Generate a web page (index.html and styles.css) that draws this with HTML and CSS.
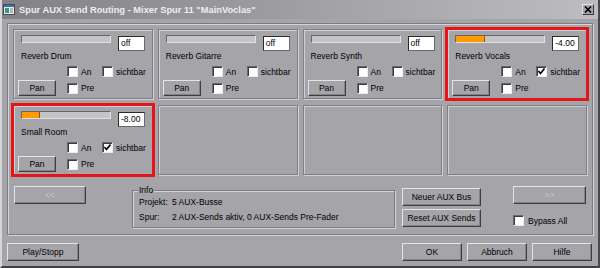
FILE: index.html
```html
<!DOCTYPE html>
<html lang="de">
<head>
    <meta charset="UTF-8">
    <title>Spur AUX Send Routing</title>
    <link rel="stylesheet" href="styles.css">
</head>
<body>
    <div class="window">
        <!-- Title bar -->
        <div class="titlebar">
            <svg class="app-icon" width="12" height="11" viewBox="0 0 12 11">
                <rect x="0.5" y="0.5" width="11" height="10" fill="#e8e8e8" stroke="#4a4a4a"/>
                <rect x="1" y="1" width="10" height="2" fill="#3c6ea8"/>
                <rect x="2" y="4" width="4" height="5" fill="#2f9c86"/>
                <rect x="7" y="4" width="3" height="5" fill="#b8b8b8"/>
            </svg>
            <span class="title">Spur AUX Send Routing - Mixer Spur 11 "MainVoclas"</span>
            <button class="close-btn" type="button">
                <svg width="8" height="7" viewBox="0 0 8 7">
                    <path d="M1 0.5 L7 6.5 M7 0.5 L1 6.5" stroke="#000" stroke-width="1.6"/>
                </svg>
            </button>
        </div>

        <div class="client">
            <div class="frame">
                <div class="send-grid">
                    <div class="send">
                        <div class="meter-row">
                            <div class="track"></div>
                            <div class="value">off</div>
                        </div>
                        <div class="send-name">Reverb Drum</div>
                        <div class="check-row">
                            <label class="check wide"><span class="box"></span>An</label>
                            <label class="check"><span class="box"></span>sichtbar</label>
                        </div>
                        <div class="pan-row">
                            <button class="btn pan" type="button">Pan</button>
                            <label class="check"><span class="box"></span>Pre</label>
                        </div>
                    </div>

                    <div class="send">
                        <div class="meter-row">
                            <div class="track"></div>
                            <div class="value">off</div>
                        </div>
                        <div class="send-name">Reverb Gitarre</div>
                        <div class="check-row">
                            <label class="check wide"><span class="box"></span>An</label>
                            <label class="check"><span class="box"></span>sichtbar</label>
                        </div>
                        <div class="pan-row">
                            <button class="btn pan" type="button">Pan</button>
                            <label class="check"><span class="box"></span>Pre</label>
                        </div>
                    </div>

                    <div class="send">
                        <div class="meter-row">
                            <div class="track"></div>
                            <div class="value">off</div>
                        </div>
                        <div class="send-name">Reverb Synth</div>
                        <div class="check-row">
                            <label class="check wide"><span class="box"></span>An</label>
                            <label class="check"><span class="box"></span>sichtbar</label>
                        </div>
                        <div class="pan-row">
                            <button class="btn pan" type="button">Pan</button>
                            <label class="check"><span class="box"></span>Pre</label>
                        </div>
                    </div>

                    <div class="send highlight">
                        <div class="meter-row">
                            <div class="track"><div class="level" style="width: 28px"></div></div>
                            <div class="value">-4.00</div>
                        </div>
                        <div class="send-name">Reverb Vocals</div>
                        <div class="check-row">
                            <label class="check wide"><span class="box"></span>An</label>
                            <label class="check"><span class="box"><svg width="9" height="9" viewBox="0 0 9 9"><path d="M1.5 4 L3.5 6.5 L7.5 1.5" fill="none" stroke="#000" stroke-width="1.7"/></svg></span>sichtbar</label>
                        </div>
                        <div class="pan-row">
                            <button class="btn pan" type="button">Pan</button>
                            <label class="check"><span class="box"></span>Pre</label>
                        </div>
                    </div>

                    <div class="send highlight">
                        <div class="meter-row">
                            <div class="track"><div class="level" style="width: 17px"></div></div>
                            <div class="value">-8.00</div>
                        </div>
                        <div class="send-name">Small Room</div>
                        <div class="check-row">
                            <label class="check wide"><span class="box"></span>An</label>
                            <label class="check"><span class="box"><svg width="9" height="9" viewBox="0 0 9 9"><path d="M1.5 4 L3.5 6.5 L7.5 1.5" fill="none" stroke="#000" stroke-width="1.7"/></svg></span>sichtbar</label>
                        </div>
                        <div class="pan-row">
                            <button class="btn pan" type="button">Pan</button>
                            <label class="check"><span class="box"></span>Pre</label>
                        </div>
                    </div>

                    <div class="send"></div>
                    <div class="send"></div>
                    <div class="send"></div>
                </div>

                <div class="lower">
                    <button class="btn nav" type="button" disabled>&lt;&lt;</button>

                    <fieldset class="info">
                        <legend>Info</legend>
                        <div class="info-row"><span class="info-key">Projekt:</span>5 AUX-Busse</div>
                        <div class="info-row"><span class="info-key">Spur:</span>2 AUX-Sends aktiv, 0 AUX-Sends Pre-Fader</div>
                    </fieldset>

                    <div class="aux-btns">
                        <button class="btn" type="button">Neuer AUX Bus</button>
                        <button class="btn" type="button">Reset AUX Sends</button>
                    </div>

                    <div class="right-col">
                        <button class="btn nav" type="button" disabled>&gt;&gt;</button>
                        <label class="check bypass"><span class="box"></span>Bypass All</label>
                    </div>
                </div>
            </div>

            <div class="footer">
                <button class="btn play" type="button">Play/Stopp</button>
                <div class="dialog-btns">
                    <button class="btn" type="button">OK</button>
                    <button class="btn" type="button">Abbruch</button>
                    <button class="btn" type="button">Hilfe</button>
                </div>
            </div>
        </div>
    </div>
</body>
</html>
```

FILE: styles.css
```css
/* Classic dialog look */
body {
    margin: 0;
    padding: 0;
    font-family: 'Liberation Sans', Arial, sans-serif;
    font-size: 8.5px;
    color: #000;
    background: #a5a4a9;
}

.window {
    width: 600px;
    height: 268px;
    box-sizing: border-box;
    background: #a5a4a9;
    border-left: 2px solid #d6d6da;
    border-right: 2px solid #4a4a4e;
    border-bottom: 2px solid #3e3e42;
}

/* Title bar */
.titlebar {
    height: 19px;
    display: flex;
    align-items: center;
    background: linear-gradient(to right, #818186, #bdbdc1);
    padding: 0 4px 0 1px;
}

.app-icon {
    margin-right: 4px;
}

.title {
    font-weight: bold;
    font-size: 9.3px;
    color: #eeeeee;
    flex: 1;
}

.close-btn {
    width: 12px;
    height: 11px;
    padding: 0;
    display: flex;
    align-items: center;
    justify-content: center;
    background: #a5a4a9;
    border: 1px solid;
    border-color: #e4e4e8 #3a3a3e #3a3a3e #e4e4e8;
}

.client {
    padding: 4px 5px 0 5px;
}

/* Etched group frame */
.frame {
    border: 1px solid #7c7b80;
    box-shadow: 1px 1px 0 #d4d4d8, inset 1px 1px 0 #d4d4d8;
    padding: 5px 5px 6px 5px;
}

.send-grid {
    display: grid;
    grid-template-columns: repeat(4, 1fr);
    grid-template-rows: 70px 70px;
    column-gap: 5px;
    row-gap: 6px;
}

.send {
    border: 1px solid #807f84;
    box-shadow: 1px 1px 0 #d0d0d4, inset 1px 1px 0 #d0d0d4;
}

.highlight {
    outline: 3px solid #e3141a;
    outline-offset: -1px;
}

.meter-row {
    display: flex;
    align-items: flex-start;
    height: 16px;
    margin-top: 5px;
    padding-left: 7px;
}

.track {
    width: 90px;
    height: 8px;
    box-sizing: border-box;
    background: #c4c4c7;
    border: 1px solid;
    border-color: #66666a #e2e2e6 #e2e2e6 #66666a;
    display: flex;
}

.level {
    background: #ff9a00;
    border-right: 1px solid #8a5a10;
}

.value {
    width: 27px;
    height: 15px;
    box-sizing: border-box;
    margin: 1px 0 0 7px;
    padding-left: 2px;
    background: #fff;
    border: 1px solid #2a2a2a;
    border-right-color: #6a6a6e;
    border-bottom-color: #6a6a6e;
    line-height: 13px;
}

.send-name {
    line-height: 13px;
    margin-top: -1px;
    padding-left: 7px;
}

.check-row {
    display: flex;
    align-items: center;
    height: 15px;
    margin-top: 1px;
    padding-left: 53px;
}

.check {
    display: flex;
    align-items: center;
    gap: 3px;
}

.check.wide {
    width: 35px;
}

.box {
    width: 11px;
    height: 11px;
    box-sizing: border-box;
    background: #fff;
    border: 1px solid;
    border-color: #68676c #ececf0 #ececf0 #68676c;
    box-shadow: inset 1px 1px 0 #3c3c40;
    display: flex;
    align-items: center;
    justify-content: center;
}

.pan-row {
    display: flex;
    align-items: center;
    height: 16px;
    margin-top: 1px;
    padding-left: 4px;
}

/* Buttons */
.btn {
    height: 18px;
    padding: 0;
    background: #a5a4a9;
    border: 1px solid;
    border-color: #e4e4e8 #3e3e42 #3e3e42 #e4e4e8;
    box-shadow: inset -1px -1px 0 #838287;
    font-family: 'Liberation Sans', Arial, sans-serif;
    font-size: 8.5px;
    color: #000;
}

.btn:disabled {
    color: #c8c8cc;
}

.pan {
    width: 38px;
    height: 16px;
    margin-right: 11px;
}

/* Lower section of the frame */
.lower {
    display: flex;
    align-items: flex-start;
    margin-top: 11px;
    padding-left: 1px;
}

.nav {
    width: 72px;
}

.info {
    box-sizing: border-box;
    width: 263px;
    height: 43px;
    margin: -1px 0 0 46px;
    padding: 0 0 0 6px;
    border: 1px solid #7c7b80;
    box-shadow: 1px 1px 0 #d4d4d8, inset 1px 1px 0 #d4d4d8;
}

.info legend {
    padding: 0 1px;
    margin-left: -1px;
    line-height: 11px;
    background: #a5a4a9;
}

.info-row {
    display: flex;
    line-height: 15px;
    margin-top: -1px;
}

.info-row + .info-row {
    margin-top: 0;
}

.info-key {
    width: 33px;
}

.aux-btns {
    display: flex;
    flex-direction: column;
    gap: 3px;
    margin: 2px 0 0 7px;
}

.aux-btns .btn {
    width: 79px;
}

.right-col {
    display: flex;
    flex-direction: column;
    margin-left: 32px;
}

.right-col .nav {
    width: 73px;
}

.bypass {
    margin-top: 11px;
    gap: 4px;
}

/* Bottom buttons */
.footer {
    display: flex;
    justify-content: space-between;
    margin-top: 8px;
}

.play {
    width: 72px;
}

.dialog-btns {
    display: flex;
    gap: 5px;
    padding-right: 1px;
}

.dialog-btns .btn {
    width: 60px;
}
```
